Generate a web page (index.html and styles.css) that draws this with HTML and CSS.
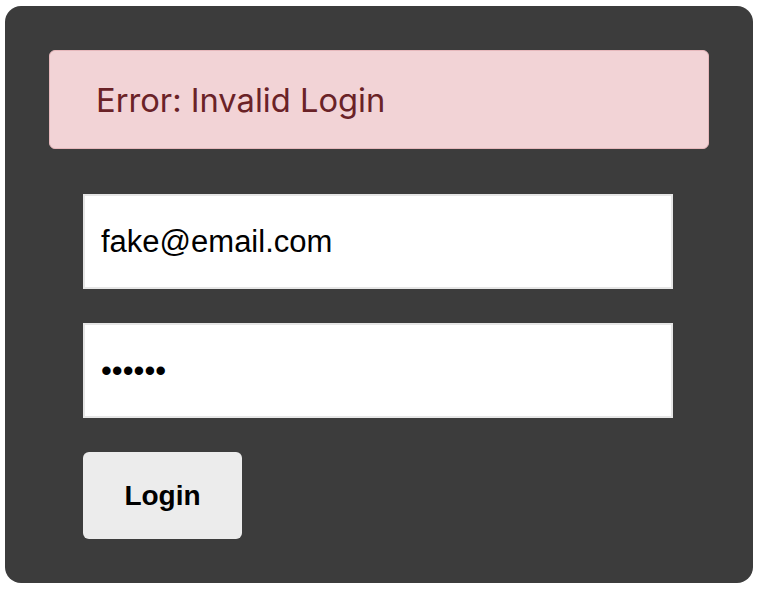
FILE: index.html
```html
<!DOCTYPE html>
<html lang="en">
<head>
<meta charset="utf-8">
<title>Login</title>
<link rel="stylesheet" href="styles.css">
</head>
<body>
<div class="panel">
  <div class="alert">Error: Invalid Login</div>
  <form class="form">
    <input class="field" type="email" value="fake@email.com">
    <input class="field" type="password" value="123456">
    <button class="btn" type="button">Login</button>
  </form>
</div>
</body>
</html>
```
FILE: styles.css
```css
html, body {
  margin: 0;
  padding: 0;
  background: #ffffff;
}
body {
  padding: 6px 0 0 5px;
}
.panel {
  box-sizing: border-box;
  width: 748px;
  height: 577px;
  background: #3c3c3c;
  border-radius: 16px;
  padding: 44px;
}
.alert {
  box-sizing: border-box;
  height: 99px;
  background: #f2d3d6;
  border: 1px solid #e6b8bc;
  border-radius: 6px;
  color: #6a2227;
  font-family: Inter, "Noto Sans", sans-serif;
  font-size: 32.7px;
  display: flex;
  align-items: center;
  padding-left: 46px;
}
.form {
  display: flex;
  flex-direction: column;
  align-items: flex-start;
  gap: 34px;
  margin: 45px 0 0 34px;
}
.field {
  box-sizing: border-box;
  width: 590px;
  height: 95px;
  margin: 0;
  border: 2px solid #e6e6e6;
  background: #ffffff;
  padding: 0 16px;
  font-family: "Liberation Sans", Arial, sans-serif;
  font-size: 31px;
  color: #000000;
  outline: none;
}
.btn {
  box-sizing: border-box;
  width: 159px;
  height: 87px;
  margin: 0;
  border: none;
  border-radius: 6px;
  background: #ececec;
  font-family: "Liberation Sans", Arial, sans-serif;
  font-weight: bold;
  font-size: 28px;
  color: #000000;
}
```
